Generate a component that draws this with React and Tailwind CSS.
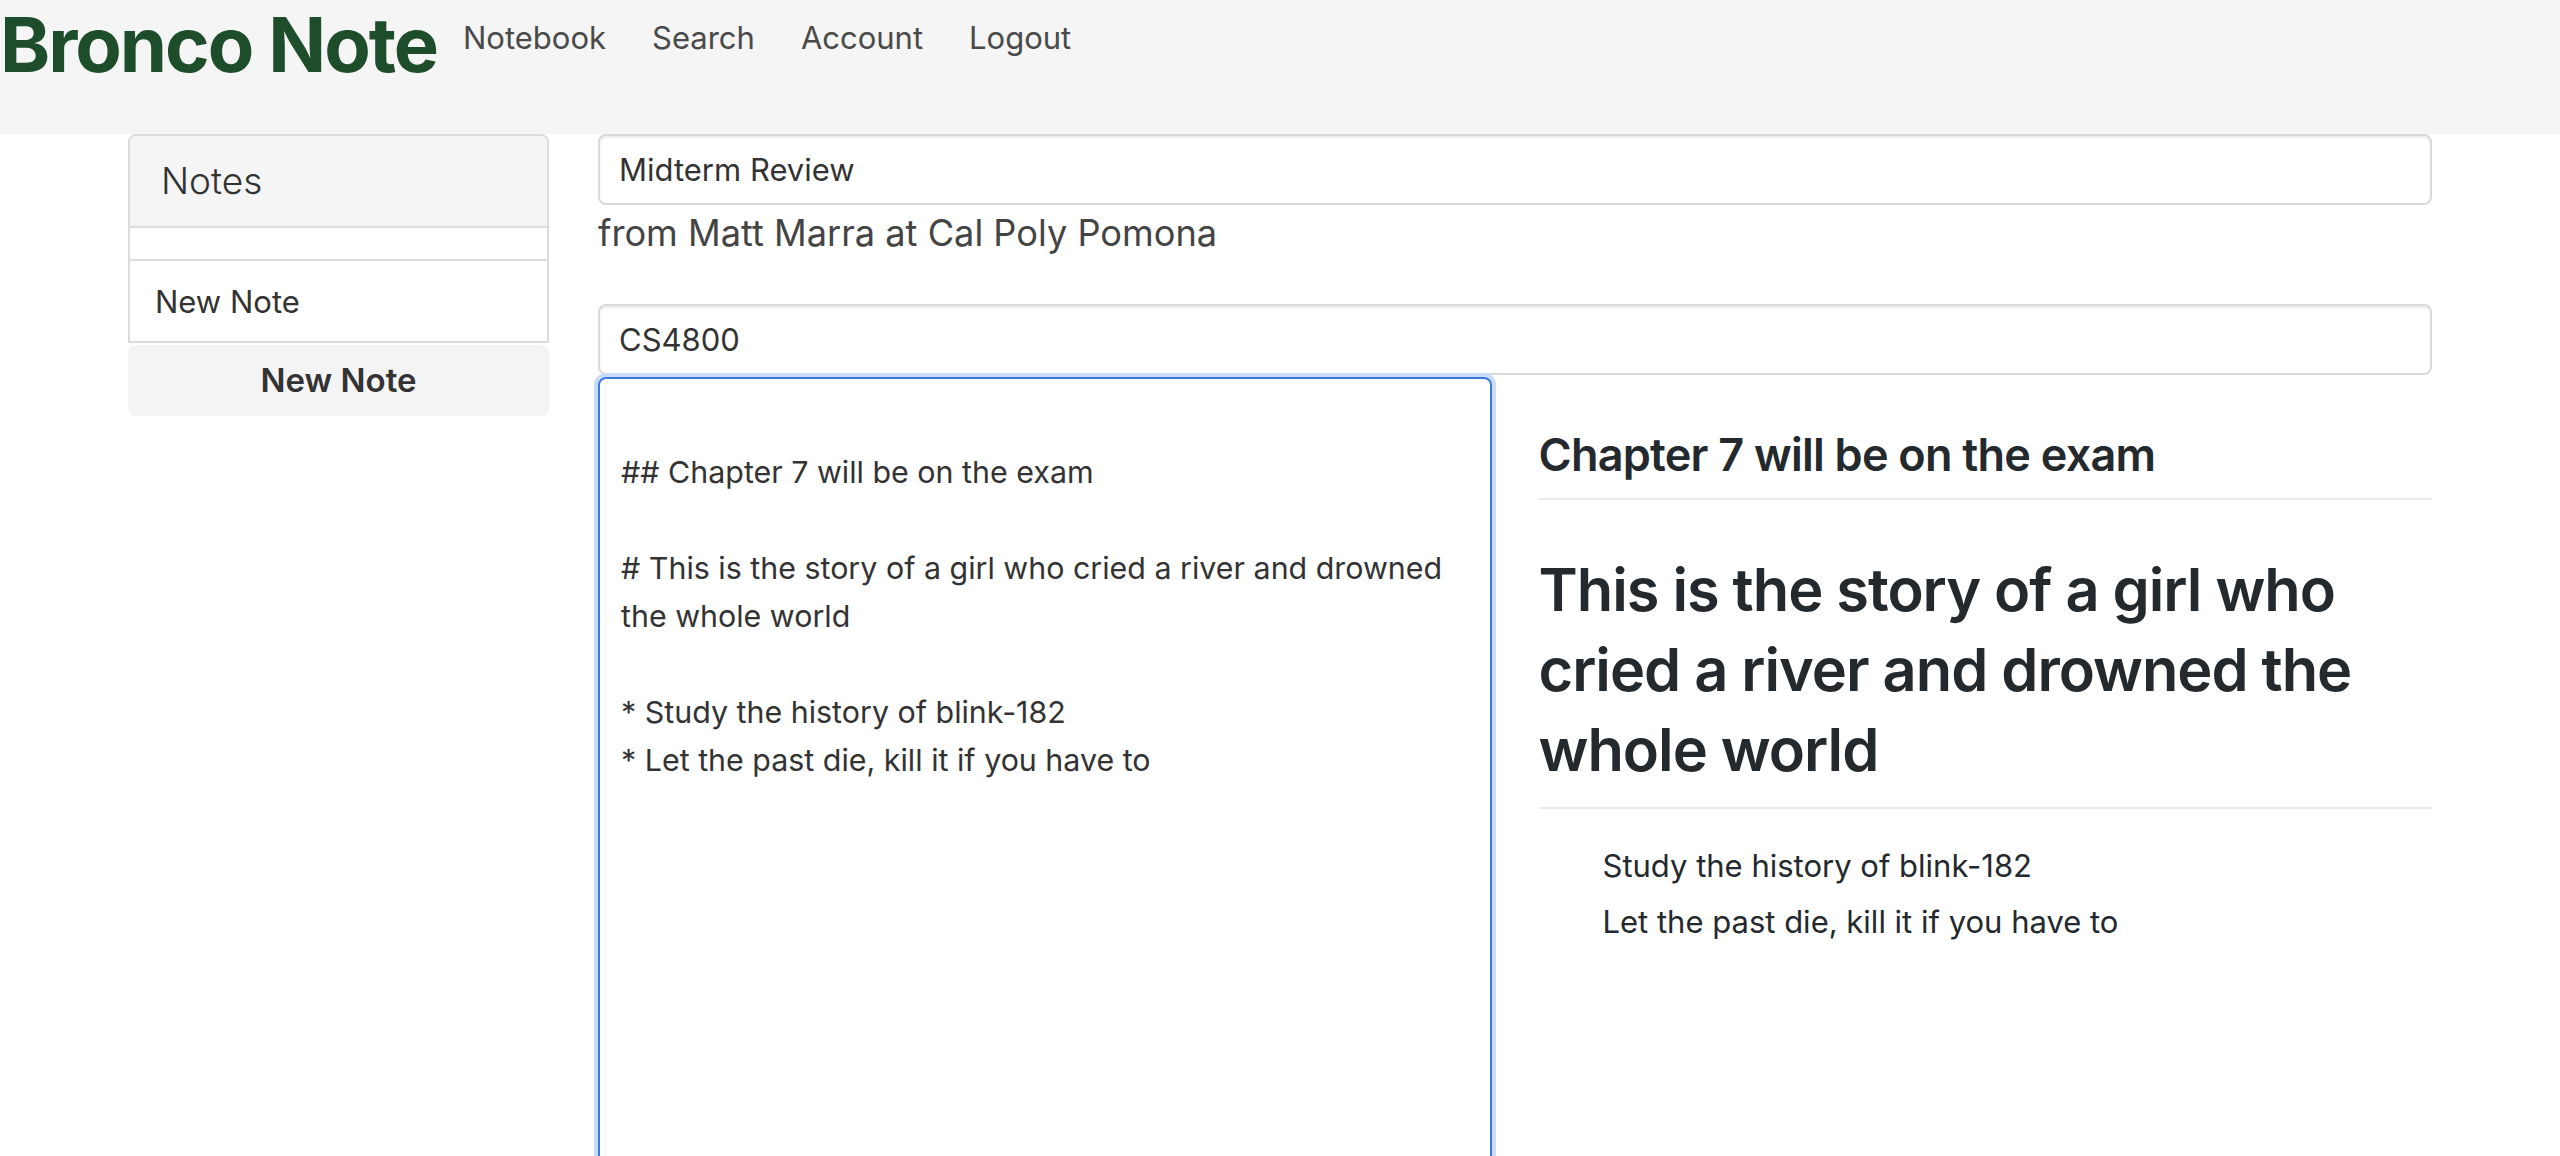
import { useState } from 'react';

const noteText =
  '\n## Chapter 7 will be on the exam\n\n# This is the story of a girl who cried a river and drowned the whole world\n\n* Study the history of blink-182\n* Let the past die, kill it if you have to';

export default function App() {
  const [title, setTitle] = useState('Midterm Review');
  const [course, setCourse] = useState('CS4800');
  const [body, setBody] = useState(noteText);

  return (
    <div className="min-h-screen bg-white font-['Inter',sans-serif]">
      {/* Navbar */}
      <header className="h-[134px] bg-[#f5f5f5] flex items-start">
        <a className="mt-[6px] text-[76px] leading-none font-bold tracking-[-0.027em] text-[#1e4d2b]">
          Bronco Note
        </a>
        <nav className="flex gap-[46px] ml-[26px] mt-[22px] text-[31px] leading-none text-[#4a4a4a]">
          <a>Notebook</a>
          <a>Search</a>
          <a>Account</a>
          <a>Logout</a>
        </nav>
      </header>

      <div className="flex px-[128px] gap-[49px]">
        {/* Sidebar */}
        <aside className="w-[421px] shrink-0">
          <div className="border-2 border-[#dcdcdc] rounded-t-[8px] text-[#333]">
            <div className="h-[92px] bg-[#f5f5f5] border-b-2 border-[#dcdcdc] rounded-t-[6px] flex items-center pl-[31px]">
              <h3 className="text-[37px] font-light">Notes</h3>
            </div>
            <div className="h-[33px] border-b-2 border-[#dcdcdc]" />
            <div className="h-[80px] flex items-center pl-[25px] pt-[2px] text-[31px]">New Note</div>
          </div>
          <button className="mt-[2px] w-full h-[71px] rounded-[8px] bg-[#f4f4f4] text-[33px] font-semibold text-[#333]">
            New Note
          </button>
        </aside>

        {/* Editor */}
        <main className="flex-1">
          <input
            value={title}
            onChange={(e) => setTitle(e.target.value)}
            className="block w-full h-[71px] border-2 border-[#d9d9d9] rounded-[8px] shadow-[inset_0_2px_2px_rgba(0,0,0,0.075)] px-[19px] text-[31px] text-[#333] outline-none"
          />
          <p className="text-[36.2px] leading-[57px] text-[#444] mb-[42px]">from Matt Marra at Cal Poly Pomona</p>
          <input
            value={course}
            onChange={(e) => setCourse(e.target.value)}
            className="block w-full h-[71px] border-2 border-[#d9d9d9] rounded-[8px] shadow-[inset_0_2px_2px_rgba(0,0,0,0.075)] px-[19px] text-[31px] text-[#333] outline-none"
          />

          <div className="grid grid-cols-2 gap-[47px] mt-[2px]">
            <textarea
              value={body}
              onChange={(e) => setBody(e.target.value)}
              className="block w-full h-[820px] resize-none border-2 border-[#3b78e0] rounded-[8px] shadow-[0_0_0_4px_#c9dbf5] px-[21px] pt-[21px] text-[30.4px] leading-[48px] text-[#333] outline-none"
            />

            <div className="pt-[48px] text-[#24292e]">
              <h2 className="text-[45px] leading-[60px] font-semibold tracking-[-0.017em] pb-[13px] border-b-2 border-[#eaecef]">
                Chapter 7 will be on the exam
              </h2>
              <h1 className="mt-[49px] text-[59.5px] leading-[80px] font-semibold tracking-[-0.017em] pb-[18px] border-b-2 border-[#eaecef]">
                This is the story of a girl who cried a river and drowned the whole world
              </h1>
              <ul className="mt-[33px] pl-[64px] text-[31px] leading-[48px] space-y-[8px]">
                <li>Study the history of blink-182</li>
                <li>Let the past die, kill it if you have to</li>
              </ul>
            </div>
          </div>
        </main>
      </div>
    </div>
  );
}
